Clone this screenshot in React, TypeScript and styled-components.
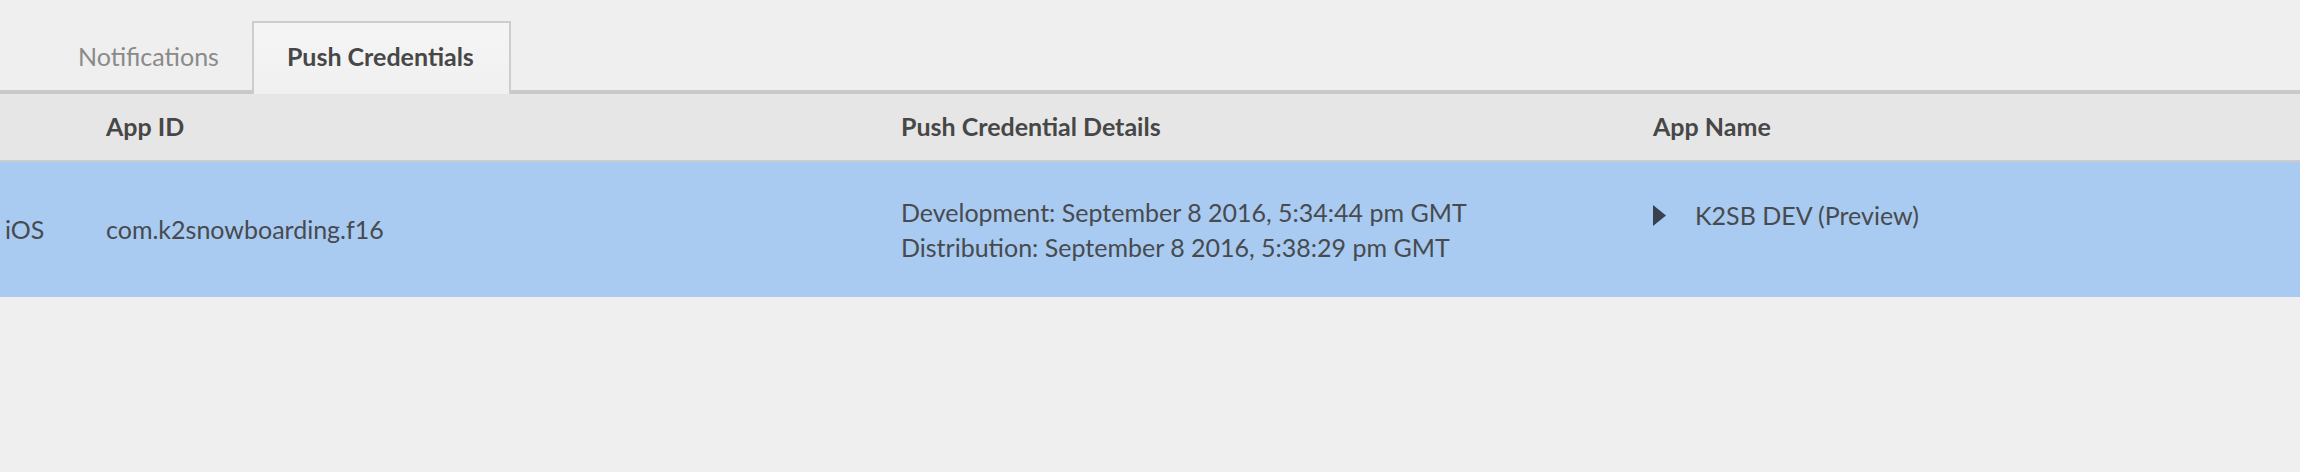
import styled, { createGlobalStyle } from "styled-components";

const GlobalStyle = createGlobalStyle`
  html, body {
    margin: 0;
    padding: 0;
    background-color: #efefef;
    font-family: Lato, "Open Sans", sans-serif;
    color: #4b4b4b;
  }
`;

const rows = [
  {
    platform: "iOS",
    appId: "com.k2snowboarding.f16",
    details: [
      "Development: September 8 2016, 5:34:44 pm GMT",
      "Distribution: September 8 2016, 5:38:29 pm GMT",
    ],
    appName: "K2SB DEV (Preview)",
    selected: true,
  },
];

export default function App() {
  return (
    <>
      <GlobalStyle />
      <Page>
        <TabBar>
          <Tab>Notifications</Tab>
          <Tab active>Push Credentials</Tab>
        </TabBar>
        <HeaderRow>
          <HeadCell />
          <HeadCell>App ID</HeadCell>
          <HeadCell>Push Credential Details</HeadCell>
          <HeadCell>App Name</HeadCell>
        </HeaderRow>
        {rows.map((r) => (
          <Row key={r.appId} selected={r.selected}>
            <Cell>{r.platform}</Cell>
            <Cell>{r.appId}</Cell>
            <Cell>
              <Lines>
                {r.details.map((d) => (
                  <div key={d}>{d}</div>
                ))}
              </Lines>
            </Cell>
            <NameCell>
              <Caret width="13" height="21" viewBox="0 0 13 21">
                <path d="M0 0 L13 10.5 L0 21 Z" fill="#38414d" />
              </Caret>
              <span>{r.appName}</span>
            </NameCell>
          </Row>
        ))}
      </Page>
    </>
  );
}

const Page = styled.div`
  width: 100%;
  min-height: 472px;
  background-color: #efefef;
`;

const TabBar = styled.div`
  display: flex;
  align-items: flex-end;
  height: 90px;
  padding-left: 45px;
  border-bottom: 4px solid #c9c9c9;
`;

const Tab = styled.div<{ active?: boolean }>`
  box-sizing: border-box;
  height: 73px;
  margin-bottom: -4px;
  padding: ${({ active }) => (active ? "0 35px 6px 33px" : "0 31px 6px 31px")};
  display: flex;
  align-items: center;
  font-size: 25px;
  font-weight: ${({ active }) => (active ? 700 : 400)};
  color: ${({ active }) => (active ? "#474747" : "#8a8a8a")};
  background: ${({ active }) =>
    active ? "linear-gradient(#f5f5f5, #f0f0f0)" : "transparent"};
  border: 2px solid ${({ active }) => (active ? "#cdcdcd" : "transparent")};
  border-bottom: none;
`;

const grid = `
  display: grid;
  grid-template-columns: 101px 795px 752px 1fr;
`;

const HeaderRow = styled.div`
  ${grid}
  height: 66px;
  background-color: #e6e6e6;
  border-bottom: 2px solid #cbcbcb;
`;

const HeadCell = styled.div`
  display: flex;
  align-items: center;
  padding: 0 0 2px 5px;
  font-size: 25px;
  font-weight: 700;
  color: #474747;
`;

const Row = styled.div<{ selected?: boolean }>`
  ${grid}
  height: 135px;
  background-color: ${({ selected }) => (selected ? "#a9cbf1" : "transparent")};
`;

const Cell = styled.div`
  display: flex;
  align-items: center;
  padding-left: 5px;
  font-size: 25px;
  line-height: 35px;
  color: #474a4e;
`;

const Lines = styled.div`
  display: flex;
  flex-direction: column;
`;

const NameCell = styled.div`
  display: flex;
  align-items: center;
  align-self: start;
  gap: 29px;
  padding: 36px 0 0 5px;
  font-size: 25px;
  line-height: 35px;
  color: #474a4e;
`;

const Caret = styled.svg`
  flex-shrink: 0;
`;
